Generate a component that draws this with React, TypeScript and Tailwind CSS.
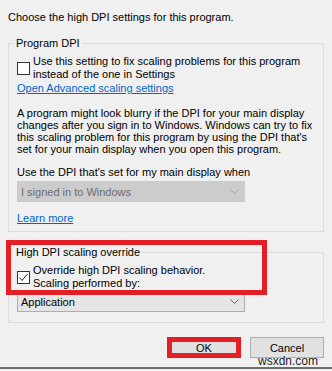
import React from 'react';

function Chevron({ color }: { color: string }) {
  return (
    <svg width="9" height="5" viewBox="0 0 9 5" className="shrink-0">
      <polyline points="0.5,0.5 4.5,4.5 8.5,0.5" fill="none" stroke={color} strokeWidth="1" />
    </svg>
  );
}

function Checkbox({ checked }: { checked?: boolean }) {
  return (
    <div className="w-[13px] h-[13px] shrink-0 border border-[#333333] bg-white">
      {checked && (
        <svg width="11" height="11" viewBox="0 0 11 11">
          <polyline points="1.5,5.5 4,8.5 9.5,2" fill="none" stroke="#333333" strokeWidth="1" />
        </svg>
      )}
    </div>
  );
}

function Select({ label, disabled }: { label: string; disabled?: boolean }) {
  return (
    <div
      className={
        disabled
          ? 'w-[228px] h-[21px] flex items-center justify-between pl-[3px] pr-[5px] border border-[#cccccc] bg-[#cccccc] text-[#6d6d6d]'
          : 'w-[228px] h-[21px] flex items-center justify-between pl-[3px] pr-[5px] border border-[#adadad] bg-[#e5e5e5] text-black'
      }
    >
      <span className="leading-[14px]">{label}</span>
      <Chevron color={disabled ? '#a6a6a6' : '#606060'} />
    </div>
  );
}

export default function App() {
  return (
    <div className="relative w-[332px] h-[371px] overflow-hidden bg-[#f0f0f0] text-black text-[11px] font-['Liberation_Sans',Arial,sans-serif]">
      <div className="px-[8px] pt-[10px]">
        <p className="leading-[14px]">Choose the high DPI settings for this program.</p>

        <fieldset className="mt-[12px] w-[316px] border border-[#dcdcdc] px-[8px] pt-[5px] pb-[6px]">
          <legend className="-ml-[3px] px-[2px] leading-[14px]">Program DPI</legend>
          <div className="flex items-center gap-[3px]">
            <Checkbox />
            <p className="leading-[13px]">
              Use this setting to fix scaling problems for this program
              <br />
              instead of the one in Settings
            </p>
          </div>
          <p className="leading-[14px] text-[#0066cc] underline">Open Advanced scaling settings</p>
          <p className="mt-[12px] leading-[12px] whitespace-nowrap">
            A program might look blurry if the DPI for your main display
            <br />
            changes after you sign in to Windows. Windows can try to fix
            <br />
            this scaling problem for this program by using the DPI that's
            <br />
            set for your main display when you open this program.
          </p>
          <p className="mt-[11px] leading-[12px]">Use the DPI that's set for my main display when</p>
          <div className="mt-[3px]">
            <Select label="I signed in to Windows" disabled />
          </div>
          <p className="mt-[9px] leading-[14px] text-[#0066cc] underline">Learn more</p>
        </fieldset>

        <fieldset className="mt-[13px] w-[316px] border border-[#dcdcdc] px-[8px] pt-[5px] pb-[10px]">
          <legend className="-ml-[3px] px-[2px] leading-[14px]">High DPI scaling override</legend>
          <div className="flex items-center gap-[3px]">
            <Checkbox checked />
            <p className="leading-[13px]">
              Override high DPI scaling behavior.
              <br />
              Scaling performed by:
            </p>
          </div>
          <div className="mt-[1px]">
            <Select label="Application" />
          </div>
        </fieldset>

        <div className="mt-[14px] flex justify-end gap-[9px]">
          <div className="relative">
            <button className="w-[74px] h-[21px] border border-[#adadad] bg-[#e1e1e1] leading-[14px]">OK</button>
            <div className="absolute inset-0 border-[5px] border-[#e31e24]" />
          </div>
          <button className="w-[74px] h-[21px] border border-[#adadad] bg-[#e1e1e1] leading-[14px]">Cancel</button>
        </div>
      </div>

      <div className="mt-[9px] h-[2px] bg-[#6f6f6f]" />

      <div className="absolute left-[6px] top-[240px] w-[261px] h-[55px] border-[5px] border-[#e31e24]" />

      <div className="absolute left-[258px] top-[354px] text-[12px] leading-[15px] text-[#1a1a1a] [text-shadow:0_0_2px_#ffffff]">
        wsxdn.com
      </div>
    </div>
  );
}
